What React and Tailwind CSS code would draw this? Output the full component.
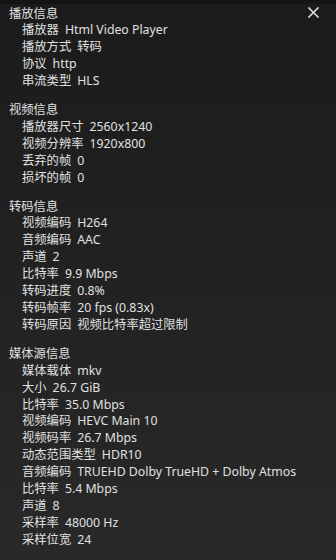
import React from "react";

const sections = [
  {
    title: "播放信息",
    items: [
      ["播放器", "Html Video Player"],
      ["播放方式", "转码"],
      ["协议", "http"],
      ["串流类型", "HLS"],
    ],
  },
  {
    title: "视频信息",
    items: [
      ["播放器尺寸", "2560x1240"],
      ["视频分辨率", "1920x800"],
      ["丢弃的帧", "0"],
      ["损坏的帧", "0"],
    ],
  },
  {
    title: "转码信息",
    items: [
      ["视频编码", "H264"],
      ["音频编码", "AAC"],
      ["声道", "2"],
      ["比特率", "9.9 Mbps"],
      ["转码进度", "0.8%"],
      ["转码帧率", "20 fps (0.83x)"],
      ["转码原因", "视频比特率超过限制"],
    ],
  },
  {
    title: "媒体源信息",
    items: [
      ["媒体载体", "mkv"],
      ["大小", "26.7 GiB"],
      ["比特率", "35.0 Mbps"],
      ["视频编码", "HEVC Main 10"],
      ["视频码率", "26.7 Mbps"],
      ["动态范围类型", "HDR10"],
      ["音频编码", "TRUEHD Dolby TrueHD + Dolby Atmos"],
      ["比特率", "5.4 Mbps"],
      ["声道", "8"],
      ["采样率", "48000 Hz"],
      ["采样位宽", "24"],
    ],
  },
];

export default function App() {
  return (
    <div
      className="relative w-[336px] h-[560px] overflow-hidden bg-gradient-to-b from-[#1b1b1b] to-[#292929] text-[#e0e0e0] text-[12.3px] leading-[16.9px]"
      style={{ fontFamily: '"Noto Sans", "Noto Sans CJK SC", sans-serif' }}
    >
      <div className="h-[4px] bg-[#141414]" />
      <div className="flex flex-col gap-[12px] pl-[9px] pt-[1.5px]">
        {sections.map((s) => (
          <div key={s.title} className="flex flex-col">
            <div>{s.title}</div>
            <div className="flex flex-col pl-[13px]">
              {s.items.map(([k, v], i) => (
                <div key={i} className="flex gap-[6px] whitespace-nowrap">
                  <span>{k}</span>
                  <span>{v}</span>
                </div>
              ))}
            </div>
          </div>
        ))}
      </div>
      <button className="absolute left-[306px] top-[5px] w-[14px] h-[14px] flex items-center justify-center">
        <svg width="11" height="11" viewBox="0 0 11 11" fill="none" stroke="#dcdcdc" strokeWidth="1.6" strokeLinecap="square">
          <path d="M1 1 L10 10 M10 1 L1 10" />
        </svg>
      </button>
    </div>
  );
}
